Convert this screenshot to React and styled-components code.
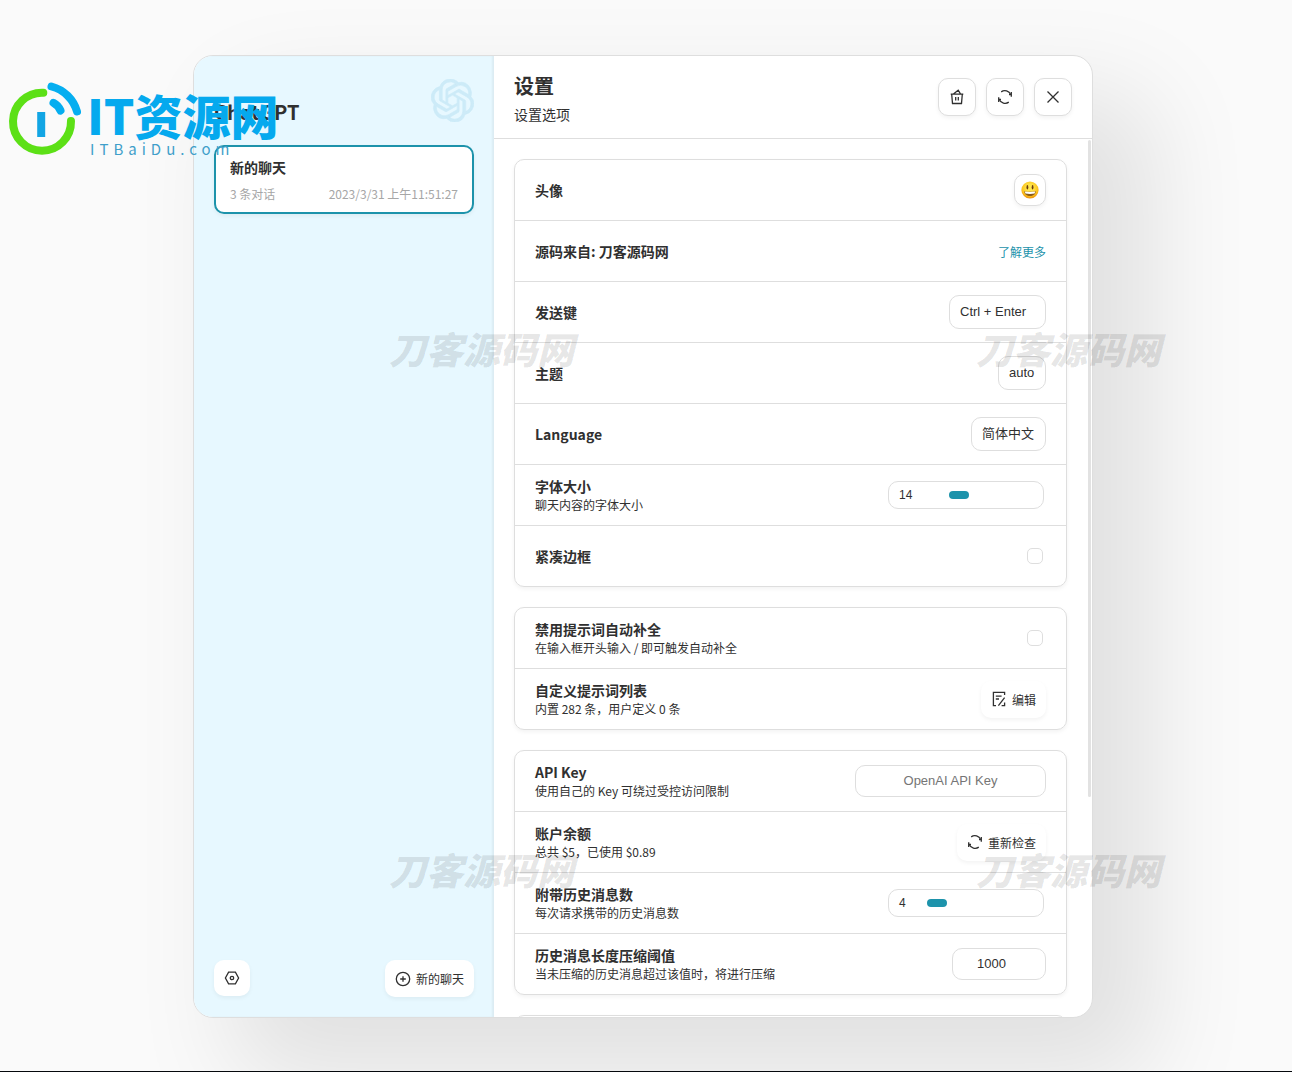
import React, { useState } from "react";
import styled, { createGlobalStyle } from "styled-components";
import { SiOpenai } from "react-icons/si";

function Stroke({ children }) {
  return (
    <svg
      width="16"
      height="16"
      viewBox="0 0 16 16"
      fill="none"
      stroke="#303030"
      strokeWidth="1.3"
      aria-hidden="true"
    >
      {children}
    </svg>
  );
}

const ClearIcon = () => (
  <Stroke>
    <path d="M1.7 5.2H14.3M2.7 5.2L3.5 14.5H12.5L13.3 5.2M4.4 5L9.2 1.3L11.6 5M6.7 8V11.6M9.3 8V11.6" />
  </Stroke>
);

const ReloadIcon = () => (
  <Stroke>
    <path d="M13.7 5.6A6.3 6.3 0 0 0 4.2 2.9M2.3 10.4A6.3 6.3 0 0 0 11.8 13.1" />
    <path d="M14.3 3V7.7M12 5.7H14.3M1.7 8.3V13M1.7 10.3H4" />
  </Stroke>
);

const CloseIcon = () => (
  <Stroke>
    <path d="M2.5 2.5L13.5 13.5M13.5 2.5L2.5 13.5" />
  </Stroke>
);

const SettingsIcon = () => (
  <Stroke>
    <path d="M4.6 2.2H11.4L14.6 8L11.4 13.8H4.6L1.4 8Z" />
    <circle cx="8" cy="8" r="1.7" />
  </Stroke>
);

const AddIcon = () => (
  <Stroke>
    <circle cx="8" cy="8" r="6.7" />
    <path d="M8 5.2V10.8M5.2 8H10.8" />
  </Stroke>
);

const EditIcon = () => (
  <Stroke>
    <path d="M13.6 4V1.4H2.4V14.6H5M4.8 5.2H10.6M4.8 8H8M13.6 6.6L7.4 14.6M10.6 14.6H13.6V11.6" />
  </Stroke>
);

const SmileIcon = () => (
  <svg width="18" height="18" viewBox="0 0 18 18" aria-hidden="true">
    <defs>
      <radialGradient id="face" cx="50%" cy="38%" r="62%">
        <stop offset="0.3" stopColor="#ffe54a" />
        <stop offset="0.75" stopColor="#fcc21b" />
        <stop offset="1" stopColor="#ec8b0c" />
      </radialGradient>
    </defs>
    <circle cx="9" cy="9" r="8.6" fill="url(#face)" />
    <ellipse cx="6.4" cy="6.3" rx="0.9" ry="2.2" fill="#6a3a10" />
    <ellipse cx="11.6" cy="6.3" rx="0.9" ry="2.2" fill="#6a3a10" />
    <path d="M3.2 10.2C7 11 11 11 14.8 10.2C14.6 13.4 12 14.9 9 14.9S3.4 13.4 3.2 10.2Z" fill="#8a5a1a" />
    <path d="M3.8 10.6C7 11.2 11 11.2 14.2 10.6L13.6 12.5C10.6 13 7.4 13 4.4 12.5Z" fill="#fff" />
  </svg>
);

function RangeInput({ label, start, ...rest }) {
  const [value, setValue] = useState(start);
  return (
    <RangeBox>
      <span>{value}</span>
      <Range
        aria-label={label}
        value={value}
        onChange={(e) => setValue(e.target.value)}
        {...rest}
      />
    </RangeBox>
  );
}

function ListItem({ title, subTitle, htmlFor, children }) {
  return (
    <Item>
      <div>
        <ItemTitle as={htmlFor ? "label" : "div"} htmlFor={htmlFor}>
          {title}
        </ItemTitle>
        {subTitle && <ItemSubTitle>{subTitle}</ItemSubTitle>}
      </div>
      {children}
    </Item>
  );
}

function SideBar() {
  return (
    <Side>
      <SideHeader>
        <SideTitle>ChatGPT</SideTitle>
        <SideLogo />
      </SideHeader>
      <ChatList>
        <ChatItem>
          <ChatTitle>新的聊天</ChatTitle>
          <ChatInfo>
            <span>3 条对话</span>
            <span>2023/3/31 上午11:51:27</span>
          </ChatInfo>
        </ChatItem>
      </ChatList>
      <SideTail>
        <IconButton aria-label="设置">
          <SettingsIcon />
        </IconButton>
        <IconButton>
          <AddIcon />
          <span>新的聊天</span>
        </IconButton>
      </SideTail>
    </Side>
  );
}

function Settings() {
  return (
    <Main>
      <Header>
        <div>
          <HeaderTitle>设置</HeaderTitle>
          <HeaderSubTitle>设置选项</HeaderSubTitle>
        </div>
        <HeaderActions>
          <IconButton $bordered aria-label="清除所有数据">
            <ClearIcon />
          </IconButton>
          <IconButton $bordered aria-label="重置所有选项">
            <ReloadIcon />
          </IconButton>
          <IconButton $bordered aria-label="关闭">
            <CloseIcon />
          </IconButton>
        </HeaderActions>
      </Header>
      <ScrollArea>
        <Lists>
          <List>
            <ListItem title="头像">
              <Avatar aria-label="头像">
                <SmileIcon />
              </Avatar>
            </ListItem>
            <ListItem title="源码来自: 刀客源码网">
              <MoreLink href="#more">了解更多</MoreLink>
            </ListItem>
            <ListItem title="发送键" htmlFor="submit-key">
              <Select id="submit-key" defaultValue="Ctrl + Enter">
                <option>Enter</option>
                <option>Ctrl + Enter</option>
                <option>Shift + Enter</option>
                <option>Alt + Enter</option>
                <option>Meta + Enter</option>
              </Select>
            </ListItem>
            <ListItem title="主题" htmlFor="theme">
              <Select id="theme" defaultValue="auto">
                <option>auto</option>
                <option>dark</option>
                <option>light</option>
              </Select>
            </ListItem>
            <ListItem title="Language" htmlFor="lang">
              <Select id="lang" defaultValue="简体中文">
                <option>简体中文</option>
                <option>繁體中文</option>
                <option>English</option>
              </Select>
            </ListItem>
            <ListItem title="字体大小" subTitle="聊天内容的字体大小">
              <RangeInput label="字体大小" start={14} min="12" max="18" />
            </ListItem>
            <ListItem title="紧凑边框" htmlFor="tight">
              <Checkbox id="tight" />
            </ListItem>
          </List>

          <List>
            <ListItem
              title="禁用提示词自动补全"
              subTitle="在输入框开头输入 / 即可触发自动补全"
              htmlFor="no-prompt"
            >
              <Checkbox id="no-prompt" />
            </ListItem>
            <ListItem
              title="自定义提示词列表"
              subTitle="内置 282 条，用户定义 0 条"
            >
              <IconButton>
                <EditIcon />
                <span>编辑</span>
              </IconButton>
            </ListItem>
          </List>

          <List>
            <ListItem
              title="API Key"
              subTitle="使用自己的 Key 可绕过受控访问限制"
              htmlFor="api-key"
            >
              <Input id="api-key" type="text" $width="191px" placeholder="OpenAI API Key" />
            </ListItem>
            <ListItem title="账户余额" subTitle="总共 $5，已使用 $0.89">
              <IconButton>
                <ReloadIcon />
                <span>重新检查</span>
              </IconButton>
            </ListItem>
            <ListItem title="附带历史消息数" subTitle="每次请求携带的历史消息数">
              <RangeInput label="附带历史消息数" start={4} min="0" max="25" />
            </ListItem>
            <ListItem
              title="历史消息长度压缩阈值"
              subTitle="当未压缩的历史消息超过该值时，将进行压缩"
              htmlFor="threshold"
            >
              <Input id="threshold" type="number" $width="94px" defaultValue={1000} />
            </ListItem>
          </List>

          <List>
            <Item />
          </List>
        </Lists>
        <ScrollTrack>
          <ScrollThumb />
        </ScrollTrack>
      </ScrollArea>
    </Main>
  );
}

function SiteLogo() {
  return (
    <LogoWrap>
      <svg width="76" height="76" viewBox="0 0 76 76" fill="none" strokeWidth="8" strokeLinecap="round">
        <path d="M35.3 12.7A29 29 0 1 0 63 41" stroke="#5ce016" />
        <path d="M43.5 6.5A36 36 0 0 1 69 31.5" stroke="#05aef0" />
        <path d="M45.5 22.8Q50 25 52.5 30.5" stroke="#05aef0" />
        <path d="M33.2 32V57" stroke="#12a5e4" strokeLinecap="butt" />
      </svg>
      <div>
        <LogoName>IT资源网</LogoName>
        <LogoDomain>ITBaiDu.com</LogoDomain>
      </div>
    </LogoWrap>
  );
}

export default function App() {
  return (
    <Page>
      <GlobalStyle />
      <Stage>
        <Window>
          <SideBar />
          <Settings />
        </Window>
      </Stage>
      <BottomEdge />
      <SiteLogo />
      <Watermark $x="389px" $y="327px">刀客源码网</Watermark>
      <Watermark $x="976px" $y="327px">刀客源码网</Watermark>
      <Watermark $x="389px" $y="848px">刀客源码网</Watermark>
      <Watermark $x="976px" $y="848px">刀客源码网</Watermark>
    </Page>
  );
}

const GlobalStyle = createGlobalStyle`
  * {
    box-sizing: border-box;
  }

  body {
    margin: 0;
    background: #fafafa;
    color: #303030;
    font-family: "Noto Sans CJK SC", sans-serif;
  }

  button, input, select {
    color: inherit;
    font-family: inherit;
  }
`;

const Page = styled.div`
  position: relative;
  display: flex;
  flex-direction: column;
  height: 100vh;
  overflow: hidden;
`;

const Stage = styled.div`
  flex: 1;
  min-height: 0;
  display: flex;
  justify-content: center;
  padding: 55px 6px 53px 0;
`;

const BottomEdge = styled.div`
  position: relative;
  height: 1px;
  background: #05080c;
`;

const Window = styled.div`
  display: flex;
  width: 100%;
  max-width: 900px;
  border: 1px solid #dedede;
  border-radius: 20px;
  box-shadow: 50px 50px 100px 10px rgba(0, 0, 0, 0.1);
  background: #fff;
  overflow: hidden;
`;

const Side = styled.aside`
  flex: 0 0 300px;
  display: flex;
  flex-direction: column;
  padding: 20px;
  background: #e7f8ff;
  box-shadow: inset -2px 0 2px 0 rgba(0, 0, 0, 0.05);
`;

const SideHeader = styled.div`
  display: flex;
  justify-content: space-between;
  align-items: flex-start;
  height: 69px;
  padding-top: 3px;
`;

const SideTitle = styled.div`
  padding-top: 18px;
  font-size: 20px;
  line-height: 30px;
  font-weight: 700;
`;

const SideLogo = styled(SiOpenai)`
  width: 43px;
  height: 43px;
  color: #cdebf8;
  stroke: #cdebf8;
  stroke-width: 0.4;
`;

const ChatList = styled.div`
  flex: 1;
`;

const ChatItem = styled.div`
  padding: 10px 14px;
  border: 2px solid #1d93ab;
  border-radius: 10px;
  background: #fff;
  box-shadow: 0 2px 4px rgba(0, 0, 0, 0.05);
`;

const ChatTitle = styled.div`
  font-size: 14px;
  line-height: 20px;
  font-weight: 700;
`;

const ChatInfo = styled.div`
  display: flex;
  justify-content: space-between;
  margin-top: 8px;
  color: #a6a6a6;
  font-size: 12px;
  line-height: 17px;
`;

const SideTail = styled.div`
  display: flex;
  justify-content: space-between;
  align-items: flex-start;
`;

const IconButton = styled.button`
  display: flex;
  align-items: center;
  justify-content: center;
  gap: 5px;
  padding: 10px;
  border: ${(props) => (props.$bordered ? "1px solid #dedede" : "none")};
  border-radius: 10px;
  background: #fff;
  box-shadow: 0 2px 4px rgba(0, 0, 0, 0.05);
  cursor: pointer;
  font-size: 12px;
  line-height: 17px;
`;

const Main = styled.main`
  flex: 1;
  min-width: 0;
  display: flex;
  flex-direction: column;
`;

const Header = styled.header`
  display: flex;
  justify-content: space-between;
  align-items: center;
  padding: 14px 20px;
  border-bottom: 1px solid #dedede;
`;

const HeaderTitle = styled.div`
  font-size: 20px;
  line-height: 32px;
  font-weight: 700;
`;

const HeaderSubTitle = styled.div`
  padding-top: 2px;
  font-size: 14px;
  line-height: 20px;
`;

const HeaderActions = styled.div`
  display: flex;
  gap: 10px;
`;

const ScrollArea = styled.div`
  flex: 1;
  min-height: 0;
  display: flex;
`;

const Lists = styled.div`
  flex: 1;
  padding: 20px;
  overflow-y: auto;
  scrollbar-width: none;
`;

const ScrollTrack = styled.div`
  width: 5px;
  padding: 1px;
`;

const ScrollThumb = styled.div`
  height: 75%;
  border-radius: 2px;
  background: #e2e2e2;
`;

const List = styled.div`
  margin-bottom: 20px;
  border: 1px solid #dedede;
  border-radius: 10px;
  box-shadow: 0 2px 4px rgba(0, 0, 0, 0.05);
`;

const Item = styled.div`
  display: flex;
  justify-content: space-between;
  align-items: center;
  min-height: 60px;
  padding: 10px 20px;

  & + & {
    border-top: 1px solid #dedede;
    min-height: 61px;
  }
`;

const ItemTitle = styled.div`
  display: block;
  font-size: 14px;
  line-height: 20px;
  font-weight: 700;
`;

const ItemSubTitle = styled.div`
  padding-bottom: 1px;
  font-size: 12px;
  line-height: 17px;
`;

const Avatar = styled.button`
  display: flex;
  align-items: center;
  justify-content: center;
  width: 32px;
  height: 32px;
  padding: 0;
  border: 1px solid #dedede;
  border-radius: 10px;
  background: #fff;
  box-shadow: 0 2px 4px rgba(0, 0, 0, 0.05);
  cursor: pointer;
`;

const MoreLink = styled.a`
  color: #1d93ab;
  font-size: 12px;
  text-decoration: none;
`;

const Select = styled.select`
  appearance: none;
  height: 34px;
  padding: 0 10px 2px;
  border: 1px solid #dedede;
  border-radius: 10px;
  background: #fff;
  font-family: "Liberation Sans", "Noto Sans CJK SC", sans-serif;
  font-size: 13px;
`;

const Input = styled.input`
  width: ${(props) => props.$width};
  height: 32px;
  padding: 0 10px 2px;
  border: 1px solid #dedede;
  border-radius: 10px;
  background: #fff;
  font-family: "Liberation Sans", sans-serif;
  font-size: 13px;
  text-align: center;

  &::placeholder {
    color: #757575;
  }

  &::-webkit-inner-spin-button {
    opacity: 0;
  }
`;

const RangeBox = styled.div`
  display: flex;
  align-items: center;
  gap: 7px;
  width: 156px;
  margin-right: 2px;
  padding: 5px 15px 5px 10px;
  border: 1px solid #dedede;
  border-radius: 10px;
  font-family: "Liberation Sans", sans-serif;
  font-size: 12px;
  line-height: 16px;
`;

const Range = styled.input.attrs({ type: "range" })`
  appearance: none;
  width: 108px;
  height: 8px;
  margin: 0;
  background: transparent;

  &::-webkit-slider-thumb {
    appearance: none;
    width: 20px;
    height: 8px;
    border-radius: 4px;
    background: #1d93ab;
  }
`;

const Checkbox = styled.input.attrs({ type: "checkbox" })`
  appearance: none;
  width: 16px;
  height: 16px;
  margin: 3px;
  border: 1px solid #dedede;
  border-radius: 5px;
  background: #fff;
`;

const LogoWrap = styled.div`
  position: absolute;
  left: 8px;
  top: 80px;
  display: flex;
  gap: 3px;
  pointer-events: none;
`;

const LogoName = styled.div`
  padding-top: 10px;
  color: #05a9ee;
  font-size: 48px;
  line-height: 48px;
  font-weight: 900;
`;

const LogoDomain = styled.div`
  padding: 1px 0 0 3px;
  color: #3f9fca;
  font-size: 15px;
  line-height: 20px;
  letter-spacing: 5px;
`;

const Watermark = styled.div`
  position: absolute;
  left: ${(props) => props.$x};
  top: ${(props) => props.$y};
  color: rgba(0, 0, 0, 0.11);
  font-size: 37px;
  line-height: 42px;
  font-style: italic;
  font-weight: 900;
  white-space: nowrap;
  pointer-events: none;
`;
